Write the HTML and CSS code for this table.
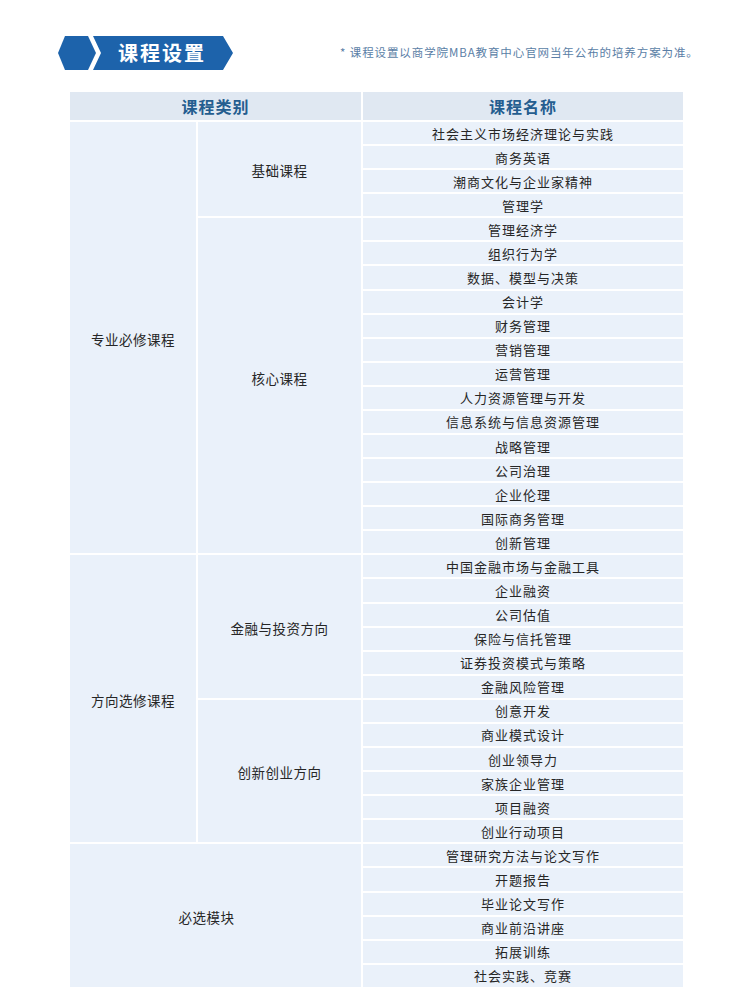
FILE: index.html
```html
<!DOCTYPE html>
<html lang="zh">
<head>
<meta charset="utf-8">
<link rel="stylesheet" href="styles.css">
</head>
<body>
<div class="page">
  <div class="top">
    <div class="banner">
      <div class="hex-small"></div>
      <div class="hex-main">课程设置</div>
    </div>
    <div class="note">* 课程设置以商学院MBA教育中心官网当年公布的培养方案为准。</div>
  </div>
  <div class="table">
    <div class="th th-cat">课程类别</div>
    <div class="th th-name">课程名称</div>

    <div class="cat c1 r-zy">专业必修课程</div>
    <div class="cat c2 r-jc">基础课程</div>
    <div class="cat c2 r-hx">核心课程</div>
    <div class="cat c1 r-fx">方向选修课程</div>
    <div class="cat c2 r-jr">金融与投资方向</div>
    <div class="cat c2 r-cx">创新创业方向</div>
    <div class="cat c12 r-bx">必选模块</div>

    <div class="nm">社会主义市场经济理论与实践</div>
    <div class="nm">商务英语</div>
    <div class="nm">潮商文化与企业家精神</div>
    <div class="nm">管理学</div>
    <div class="nm">管理经济学</div>
    <div class="nm">组织行为学</div>
    <div class="nm">数据、模型与决策</div>
    <div class="nm">会计学</div>
    <div class="nm">财务管理</div>
    <div class="nm">营销管理</div>
    <div class="nm">运营管理</div>
    <div class="nm">人力资源管理与开发</div>
    <div class="nm">信息系统与信息资源管理</div>
    <div class="nm">战略管理</div>
    <div class="nm">公司治理</div>
    <div class="nm">企业伦理</div>
    <div class="nm">国际商务管理</div>
    <div class="nm">创新管理</div>
    <div class="nm">中国金融市场与金融工具</div>
    <div class="nm">企业融资</div>
    <div class="nm">公司估值</div>
    <div class="nm">保险与信托管理</div>
    <div class="nm">证券投资模式与策略</div>
    <div class="nm">金融风险管理</div>
    <div class="nm">创意开发</div>
    <div class="nm">商业模式设计</div>
    <div class="nm">创业领导力</div>
    <div class="nm">家族企业管理</div>
    <div class="nm">项目融资</div>
    <div class="nm">创业行动项目</div>
    <div class="nm">管理研究方法与论文写作</div>
    <div class="nm">开题报告</div>
    <div class="nm">毕业论文写作</div>
    <div class="nm">商业前沿讲座</div>
    <div class="nm">拓展训练</div>
    <div class="nm">社会实践、竞赛</div>
  </div>
</div>
</body>
</html>
```

FILE: styles.css
```css
html, body {
  margin: 0;
  padding: 0;
  background: #ffffff;
}
.page {
  width: 750px;
  height: 1000px;
  overflow: hidden;
  font-family: "Noto Sans CJK SC", "Noto Sans", sans-serif;
}
.top {
  display: flex;
  align-items: center;
  padding: 36px 0 0 58px;
  height: 34px;
}
.banner {
  display: flex;
  width: 176px;
  height: 34px;
}
.hex-small {
  width: 38px;
  height: 34px;
  background: #1d63ab;
  clip-path: polygon(0 50%, 7px 0, 30px 0, 38px 50%, 30px 100%, 7px 100%);
}
.hex-main {
  width: 140px;
  height: 34px;
  margin-left: -3px;
  background: #1d63ab;
  clip-path: polygon(0 0, 130px 0, 140px 50%, 130px 100%, 0 100%, 8px 50%);
  color: #ffffff;
  font-weight: bold;
  font-size: 20px;
  letter-spacing: 2px;
  line-height: 34px;
  padding-left: 25px;
  box-sizing: border-box;
}
.note {
  margin-left: 106px;
  font-size: 11.5px;
  letter-spacing: 0.9px;
  color: #5a7ea6;
  margin-top: -2px;
}
.table {
  margin: 22px 0 0 70px;
  width: 613px;
  display: grid;
  grid-template-columns: 126px 163px 320px;
  grid-template-rows: 28px;
  grid-auto-rows: 22.08px;
  gap: 2px;
  background: #ffffff;
}
.th {
  background: #e0e8f2;
  color: #245d8f;
  font-weight: bold;
  font-size: 16px;
  display: flex;
  align-items: center;
  justify-content: center;
  letter-spacing: 1px;
}
.th-cat { grid-column: 1 / 3; grid-row: 1; }
.th-name { grid-column: 3; grid-row: 1; }
.cat {
  background: #eaf1fa;
  color: #262626;
  font-size: 13.5px;
  display: flex;
  align-items: center;
  justify-content: center;
  letter-spacing: 0.5px;
  padding-top: 2px;
  box-sizing: border-box;
}
.c1 { grid-column: 1; }
.c2 { grid-column: 2; }
.c12 { grid-column: 1 / 3; padding-right: 18px; }
.r-zy { grid-row: 2 / 20; }
.r-jc { grid-row: 2 / 6; }
.r-hx { grid-row: 6 / 20; padding-top: 0; padding-bottom: 16px; }
.r-fx { grid-row: 20 / 32; }
.r-jr { grid-row: 20 / 26; }
.r-cx { grid-row: 26 / 32; }
.r-bx { grid-row: 32 / 38; }
.nm {
  grid-column: 3;
  background: #eaf1fa;
  color: #262626;
  font-size: 13px;
  display: flex;
  align-items: center;
  justify-content: center;
  letter-spacing: 1px;
}
```
